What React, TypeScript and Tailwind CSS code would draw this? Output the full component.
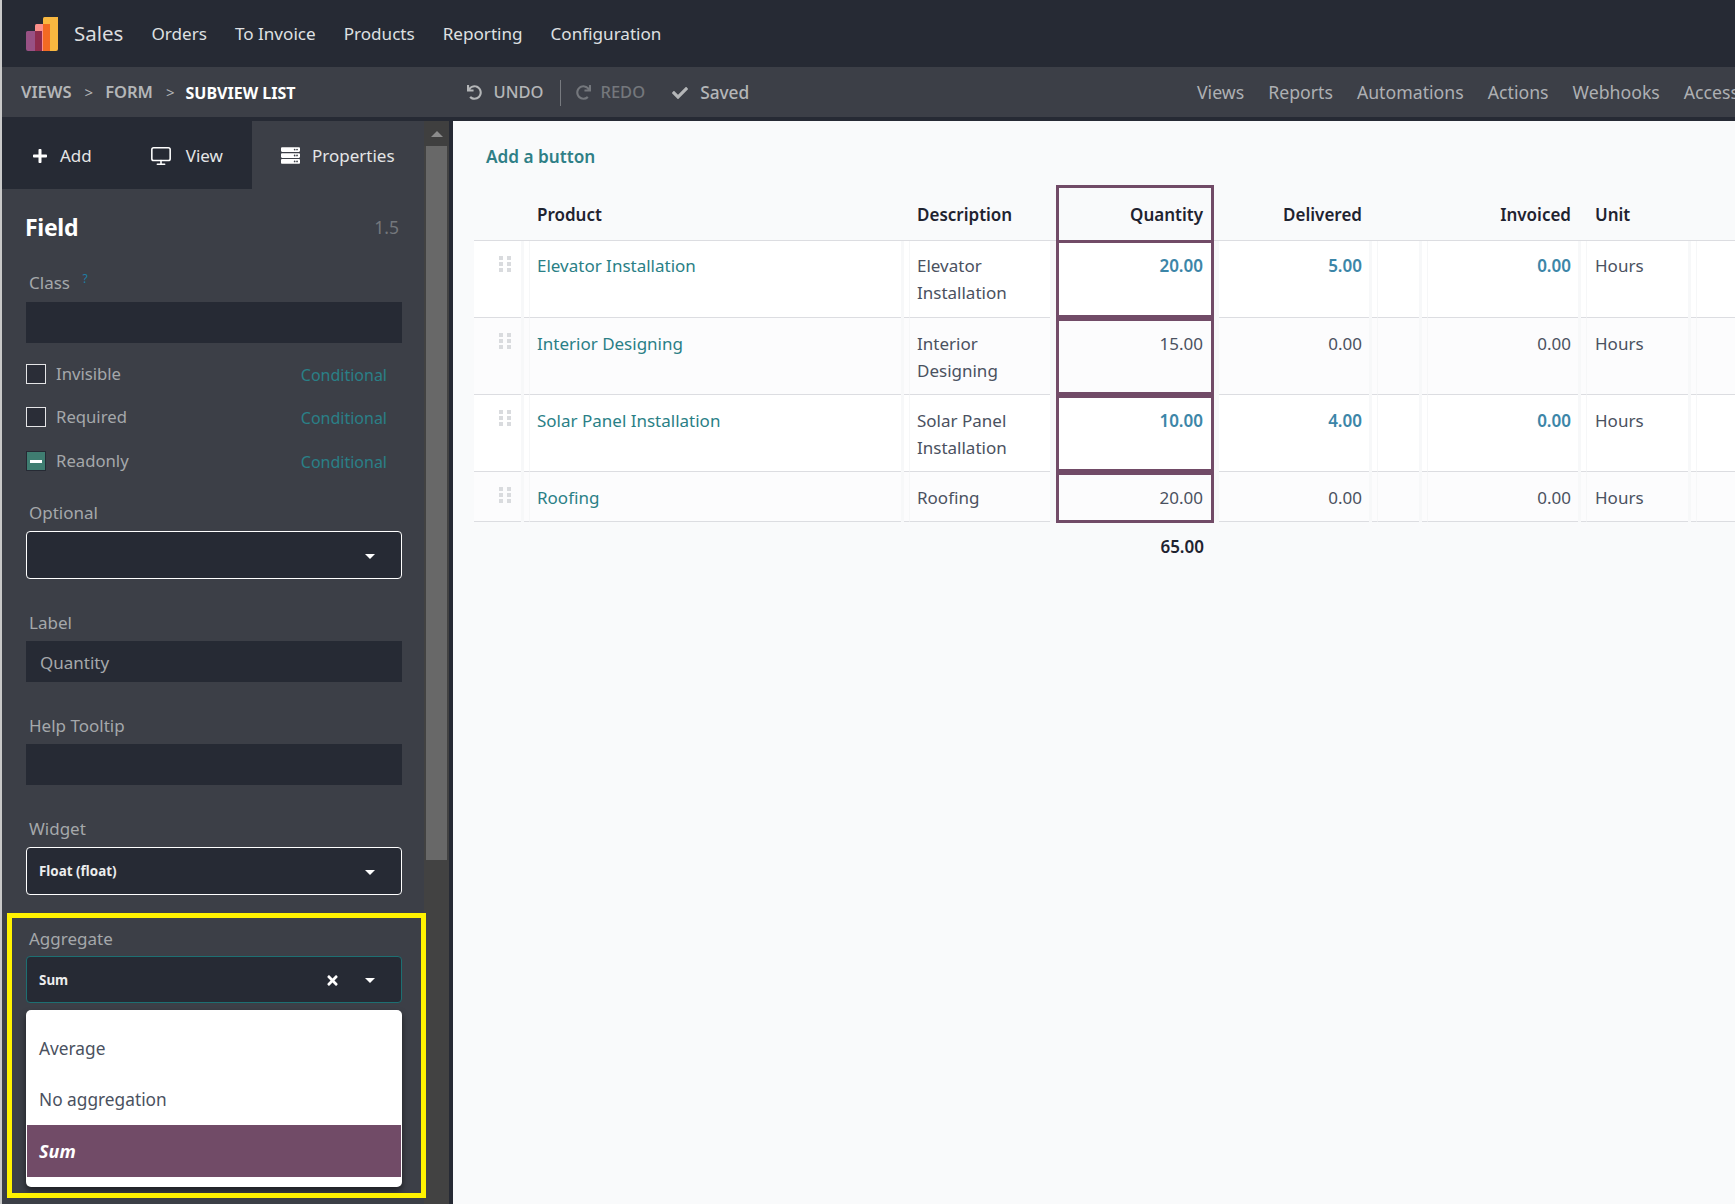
import { Monitor } from "lucide-react";
import { FaCheck, FaPlus, FaRedo, FaServer, FaTimes, FaUndo } from "react-icons/fa";

type Row = {
  product: string;
  desc: string[];
  qty: string;
  delivered: string;
  invoiced: string;
  bold: boolean;
  height: string;
  pad: string;
  qtyCell: string;
  bg: string;
};

const rows: Row[] = [
  { product: "Elevator Installation", desc: ["Elevator", "Installation"], qty: "20.00", delivered: "5.00", invoiced: "0.00", bold: true, height: "h-[77px]", pad: "pt-[11px]", qtyCell: "-mt-px h-[78px] pt-[9px]", bg: "bg-white" },
  { product: "Interior Designing", desc: ["Interior", "Designing"], qty: "15.00", delivered: "0.00", invoiced: "0.00", bold: false, height: "h-[77px]", pad: "pt-[12px]", qtyCell: "pt-[9px]", bg: "bg-[#fcfcfd]" },
  { product: "Solar Panel Installation", desc: ["Solar Panel", "Installation"], qty: "10.00", delivered: "4.00", invoiced: "0.00", bold: true, height: "h-[77px]", pad: "pt-[12px]", qtyCell: "pt-[9px]", bg: "bg-white" },
  { product: "Roofing", desc: ["Roofing"], qty: "20.00", delivered: "0.00", invoiced: "0.00", bold: false, height: "h-[50px]", pad: "pt-[12px]", qtyCell: "h-[51px] pt-[9px]", bg: "bg-[#fcfcfd]" },
];

function Logo() {
  return (
    <svg width="34" height="34" viewBox="0 0 34 34" className="shrink-0">
      <path d="M18 1.5a1.5 1.5 0 0 1 1.5-1.5H33v32a2 2 0 0 1-2 2H18z" fill="#f9b840" />
      <path d="M10 8.5A1.5 1.5 0 0 1 11.500 7H25v27H10z" fill="#fb8f8a" />
      <path d="M18 7h7v27h-7z" fill="#f26a22" />
      <path d="M1 15.500A1.500 1.500 0 0 1 2.500 14H17v20H3a2 2 0 0 1-2-2z" fill="#985184" />
      <path d="M10 14h7v20h-7z" fill="#8f2c4d" />
    </svg>
  );
}

function Caret() {
  return <span className="mt-[2px] block h-0 w-0 border-x-[5px] border-t-[5px] border-x-transparent border-t-white" />;
}

function Label({ children }: { children: React.ReactNode }) {
  return <div className="h-7 pl-[3px] text-[17px] leading-7 text-[#a5a8ab]">{children}</div>;
}

function CheckRow({ label, mt, state }: { label: string; mt: string; state?: boolean }) {
  return (
    <div className={`flex h-5 items-center ${mt}`}>
      {state ? (
        <span className="flex h-5 w-5 items-center justify-center border border-[#262a34] bg-[#3f7d71]">
          <span className="h-[3px] w-[12px] bg-white" />
        </span>
      ) : (
        <span className="h-5 w-5 border border-[#e4e4e6] bg-[#2a2d37]" />
      )}
      <span className="ml-[10px] text-[16.700px] text-[#a5a8ab]">{label}</span>
      <span className="ml-auto mr-[15px] mt-[2px] text-[16px] text-[#2a8087]">Conditional</span>
    </div>
  );
}

function Select({ value, border = "border-white", height = "h-12", clear }: { value?: string; border?: string; height?: string; clear?: boolean }) {
  return (
    <div className={`flex items-center rounded-[4px] border bg-[#262a34] pl-[11px] pr-[26px] text-[13.400px] font-bold text-[#eceded] ${border} ${height}`}>
      <span className="ml-px mt-px">{value}</span>
      {clear && <FaTimes className="ml-auto mr-[25px] mt-px text-[15px] text-white" />}
      <span className={clear ? "" : "ml-auto"}>
        <Caret />
      </span>
    </div>
  );
}

function Sidebar() {
  return (
    <aside className="relative z-10 w-[422px] shrink-0 bg-[#3c3f47]">
      <div className="flex h-[68px] text-[17px] text-[#e4e5e6]">
        <div className="flex w-[250px] items-center bg-[#262a34] pt-px">
          <FaPlus className="ml-[30px] text-[16px] text-white" />
          <span className="ml-[12px]">Add</span>
          <Monitor className="ml-[58px] text-white" size={22} strokeWidth={1.700} />
          <span className="ml-[14px]">View</span>
        </div>
        <div className="flex flex-1 items-center pt-px">
          <FaServer className="ml-[29px] text-[19px] text-white" />
          <span className="ml-[12px]">Properties</span>
        </div>
      </div>

      <div className="pl-[24px] pr-[22px]">
        <div className="mt-6 flex h-7 items-center justify-between">
          <span className="-ml-px text-[23px] font-bold tracking-[-0.3px] text-white">Field</span>
          <span className="mr-[3px] text-[17.500px] text-[#74777c]">1.5</span>
        </div>

        <div className="mt-7">
          <Label>
            Class <sup className="ml-2 text-[12px] text-[#1f7ea5]">?</sup>
          </Label>
        </div>
        <div className="mt-[5px] h-[41px] bg-[#262a34]" />

        <CheckRow label="Invisible" mt="mt-[21px]" />
        <CheckRow label="Required" mt="mt-[23px]" />
        <CheckRow label="Readonly" mt="mt-6" state />

        <div className="mt-7">
          <Label>Optional</Label>
        </div>
        <div className="mt-1">
          <Select />
        </div>

        <div className="mt-[30px]">
          <Label>Label</Label>
        </div>
        <div className="mt-1 flex h-[41px] items-center bg-[#262a34] pl-[14px] pt-[2px] text-[17px] text-[#a5a8ab]">Quantity</div>

        <div className="mt-[30px]">
          <Label>Help Tooltip</Label>
        </div>
        <div className="mt-1 h-[41px] bg-[#262a34]" />

        <div className="mt-[30px]">
          <Label>Widget</Label>
        </div>
        <div className="mt-1">
          <Select value="Float (float)" />
        </div>

        <div className="relative mt-[30px]">
          <Label>Aggregate</Label>
          <div className="mt-[3px]">
            <Select value="Sum" border="border-[#1d6f72]" height="h-[47px]" clear />
          </div>
          <div className="absolute left-0 right-0 top-[85px] h-[177px] rounded-[5px] bg-white pt-[13px] text-[17.300px] text-[#4a5160] shadow-[0_4px_6px_rgba(0,0,0,0.5)]">
            <div className="flex h-[51px] items-center pl-[13px]">Average</div>
            <div className="flex h-[51px] items-center pl-[13px]">No aggregation</div>
            <div className="mx-px flex h-[52px] items-center bg-[#714b67] pl-[12px] text-[18px] font-bold italic text-white">Sum</div>
          </div>
          <div className="absolute -left-[19px] -top-[12px] h-[285px] w-[419px] border-[5px] border-[#fff200]" />
        </div>
      </div>
    </aside>
  );
}

function Scrollbar() {
  return (
    <div className="flex w-[29px] shrink-0 flex-col bg-[#262a34]">
      <div className="flex h-[25px] w-[25px] items-center justify-center bg-[#3f3f3f]">
        <span className="h-0 w-0 border-x-[6px] border-b-[6px] border-x-transparent border-b-[#8c8c8c]" />
      </div>
      <div className="flex w-[25px] flex-1 flex-col bg-[#424242] px-[2px]">
        <div className="h-[714px] bg-[#686868]" />
      </div>
    </div>
  );
}

function Handle() {
  return (
    <div className="ml-[25px] mt-[15px] grid w-[12px] grid-cols-2 gap-x-[4px] gap-y-[2px]">
      {[0, 1, 2, 3, 4, 5].map((i) => (
        <span key={i} className="h-[4px] w-[4px] bg-[#d9dbde]" />
      ))}
    </div>
  );
}

// gap in the row line, with the faint resize rule a few pixels after it
function Sep() {
  return (
    <>
      <div className="w-[3px] shrink-0 bg-[#f7f8f9]" />
      <div className="w-[6px] shrink-0 border-b border-r border-b-[#dcdde1] border-r-[#f6f7f8]" />
    </>
  );
}

function DataRow({ row }: { row: Row }) {
  const line = "border-b border-[#dcdde1]";
  const num = row.bold ? "font-semibold text-[#3c86a8]" : "text-[#4a5160]";
  return (
    <div className={`flex text-[17px] leading-[28px] text-[#4a5160] ${row.height} ${row.bg}`}>
      <div className={`w-[47px] ${line}`}>
        <Handle />
      </div>
      <Sep />
      <div className={`w-[371px] pl-[7px] text-[#2a7f86] ${line} ${row.pad}`}>{row.product}</div>
      <Sep />
      <div className={`w-[140px] pl-[7px] leading-[27px] ${line} ${row.pad}`}>
        {row.desc.map((d) => (
          <div key={d}>{d}</div>
        ))}
      </div>
      <div className="w-[6px] bg-[#f7f8f9]" />
      <div className={`relative z-10 w-[158px] border-[3px] border-[#714b67] pr-[8px] text-right ${num} ${row.qtyCell}`}>{row.qty}</div>
      <div className="w-[5px] bg-[#f7f8f9]" />
      <div className={`w-[150px] pr-[7px] text-right ${num} ${line} ${row.pad}`}>{row.delivered}</div>
      <Sep />
      <div className={`w-[41px] ${line}`} />
      <Sep />
      <div className={`w-[150px] pr-[7px] text-right ${num} ${line} ${row.pad}`}>{row.invoiced}</div>
      <Sep />
      <div className={`w-[101px] pl-[8px] ${line} ${row.pad}`}>Hours</div>
      <Sep />
      <div className={`flex-1 ${line}`} />
    </div>
  );
}

function ListView() {
  return (
    <main className="min-w-0 flex-1 overflow-hidden bg-[#f9fafb] pl-[21px]">
      <div className="ml-[12px] mt-[23px] h-[26px] text-[17.200px] font-semibold leading-[26px] text-[#2f7f86]">Add a button</div>
      <div className="mt-[15px] flex h-[56px] items-stretch border-b border-[#dcdde1] text-[17px] font-semibold leading-[28px] text-[#1f2330]">
        <div className="ml-[56px] w-[371px] pl-[7px] pt-4">Product</div>
        <div className="ml-[9px] w-[140px] pl-[7px] pt-4">Description</div>
        <div className="relative z-10 ml-[6px] w-[158px] border-x-[3px] border-t-[3px] border-[#714b67] pr-[8px] pt-[13px] text-right">Quantity</div>
        <div className="ml-[5px] w-[150px] pr-[7px] pt-4 text-right">Delivered</div>
        <div className="ml-[59px] w-[150px] pr-[7px] pt-4 text-right">Invoiced</div>
        <div className="ml-[9px] w-[101px] pl-[8px] pt-4">Unit</div>
      </div>
      {rows.map((row) => (
        <DataRow key={row.product} row={row} />
      ))}
      <div className="ml-[585px] mt-[11px] w-[145px] text-right text-[17px] font-semibold leading-7 text-[#1f2330]">65.00</div>
    </main>
  );
}

export default function App() {
  return (
    <div className="flex h-[1204px] w-full flex-col overflow-hidden border-l-2 border-[#c9c9c9] bg-[#262a34] [font-family:'Noto_Sans',sans-serif]">
      <nav className="flex h-[67px] shrink-0 items-center text-[17.100px] text-[#dfe0e2]">
        <div className="ml-[23px]">
          <Logo />
        </div>
        <span className="ml-[15px] text-[20.500px] text-[#dcdddf]">Sales</span>
        <span className="ml-[28px]">Orders</span>
        <span className="ml-[28px]">To Invoice</span>
        <span className="ml-[28px]">Products</span>
        <span className="ml-[28px]">Reporting</span>
        <span className="ml-[28px]">Configuration</span>
      </nav>

      <div className="flex h-[50px] shrink-0 items-center overflow-hidden whitespace-nowrap bg-[#3c3f47] pt-px text-[#b4b6b8]">
        <span className="ml-[19px] text-[16.500px] font-semibold">VIEWS</span>
        <span className="ml-[13px] text-[15px]">&gt;</span>
        <span className="ml-[12px] text-[16.500px] font-semibold">FORM</span>
        <span className="ml-[13px] text-[15px]">&gt;</span>
        <span className="ml-[11px] text-[16px] font-bold text-white">SUBVIEW LIST</span>
        <FaUndo className="ml-[171px] text-[15px]" />
        <span className="ml-[12px] text-[16.500px] font-medium">UNDO</span>
        <span className="ml-[16px] h-[26px] w-px bg-[#777a7f]" />
        <FaRedo className="ml-[15px] text-[15px] text-[#74777c]" />
        <span className="ml-[10px] text-[16.500px] font-medium text-[#74777c]">REDO</span>
        <FaCheck className="ml-[27px] text-[16px]" />
        <span className="ml-[12px] text-[17.300px] font-medium">Saved</span>
        <div className="ml-auto flex shrink-0 gap-[24px] text-[17.700px] text-[#aeb0b3]">
          <span>Views</span>
          <span>Reports</span>
          <span>Automations</span>
          <span>Actions</span>
          <span>Webhooks</span>
          <span className="-mr-[4px]">Access</span>
        </div>
      </div>

      <div className="flex min-h-0 flex-1 pt-1">
        <Sidebar />
        <Scrollbar />
        <ListView />
      </div>
    </div>
  );
}
